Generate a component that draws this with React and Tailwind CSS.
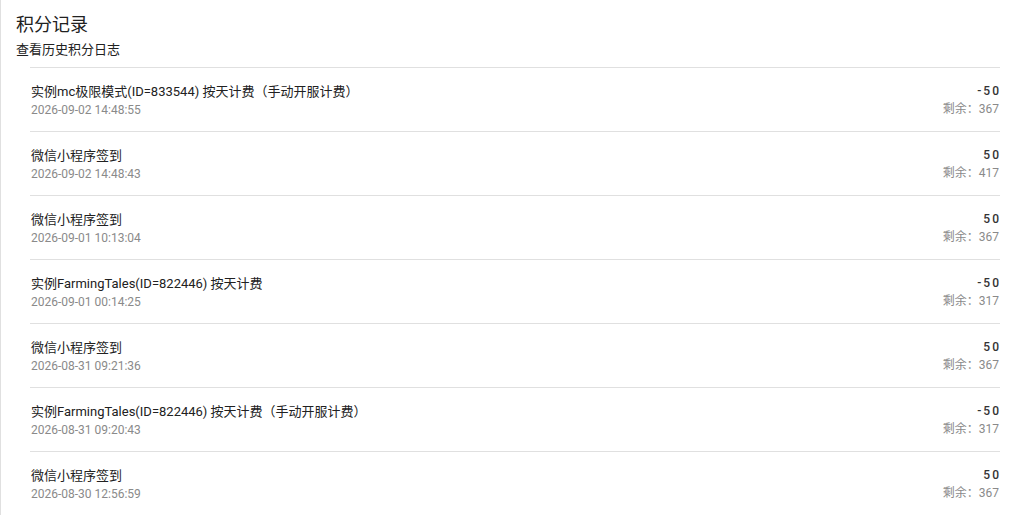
const records = [
  { title: "实例mc极限模式(ID=833544) 按天计费（手动开服计费）", time: "2026-09-02 14:48:55", amount: "-50", left: 367 },
  { title: "微信小程序签到", time: "2026-09-02 14:48:43", amount: "50", left: 417 },
  { title: "微信小程序签到", time: "2026-09-01 10:13:04", amount: "50", left: 367 },
  { title: "实例FarmingTales(ID=822446) 按天计费", time: "2026-09-01 00:14:25", amount: "-50", left: 317 },
  { title: "微信小程序签到", time: "2026-08-31 09:21:36", amount: "50", left: 367 },
  { title: "实例FarmingTales(ID=822446) 按天计费（手动开服计费）", time: "2026-08-31 09:20:43", amount: "-50", left: 317 },
  { title: "微信小程序签到", time: "2026-08-30 12:56:59", amount: "50", left: 367 },
];

export default function App() {
  return (
    <div
      className="min-h-[515px] bg-white border-l border-[#e0e0e0] text-[#212121]"
      style={{ fontFamily: 'Roboto, "Noto Sans CJK SC", sans-serif' }}
    >
      <div className="pl-[15px] pt-[12px]">
        <h1 className="text-[18px] leading-[26px] font-normal">积分记录</h1>
        <p className="text-[13px] leading-[20px] mt-[2px]">查看历史积分日志</p>
      </div>

      <ul className="ml-[29px] mr-[24px] mt-[7px]">
        {records.map((r, i) => (
          <li
            key={i}
            className="flex justify-between border-t border-[#e0e0e0] pt-[15px] pb-[14px]"
          >
            <div>
              <div className="text-[13px] leading-[18px] pl-[1px]">{r.title}</div>
              <div className="text-[12px] leading-[14px] text-[#8a8a8a] pl-[1px] mt-[2px]">{r.time}</div>
            </div>
            <div className="text-right pr-[1px]">
              <div className="text-[12px] leading-[16px] font-medium text-[#333] tracking-[2px] -mr-[2px]">{r.amount}</div>
              <div className="text-[12px] leading-[14px] text-[#8a8a8a] mt-[3px]">剩余：{r.left}</div>
            </div>
          </li>
        ))}
      </ul>
    </div>
  );
}
